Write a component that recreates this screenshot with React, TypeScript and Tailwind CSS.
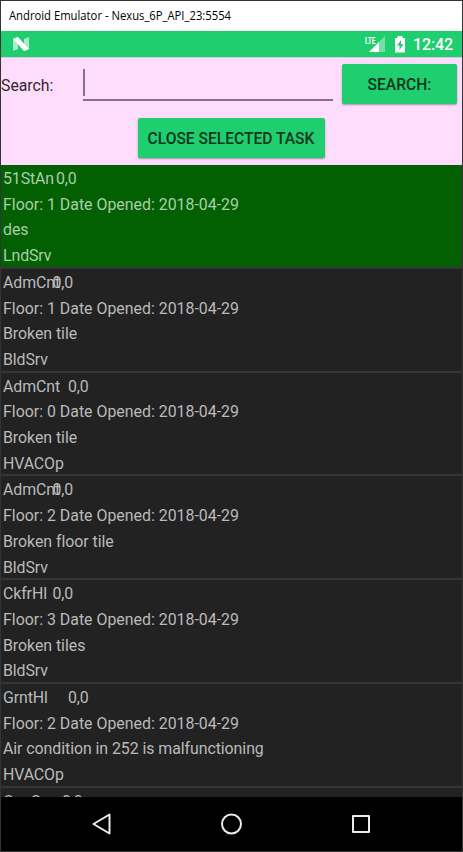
interface Task {
  building: string;
  floor: number;
  description: string;
  service: string;
  coordsLeft: string;
  selected?: boolean;
  tight?: boolean;
}

const tasks: Task[] = [
  { building: "51StAn", floor: 1, description: "des", service: "LndSrv", coordsLeft: "left-[53px]", selected: true },
  { building: "AdmCnt", floor: 1, description: "Broken tile", service: "BldSrv", coordsLeft: "left-[49.5px]" },
  { building: "AdmCnt", floor: 0, description: "Broken tile", service: "HVACOp", coordsLeft: "left-[65px]" },
  { building: "AdmCnt", floor: 2, description: "Broken floor tile", service: "BldSrv", coordsLeft: "left-[49.5px]" },
  { building: "CkfrHl", floor: 3, description: "Broken tiles", service: "BldSrv", coordsLeft: "left-[49.5px]" },
  { building: "GrntHl", floor: 2, description: "Air condition in 252 is malfunctioning", service: "HVACOp", coordsLeft: "left-[65px]", tight: true },
  { building: "GeoSce", floor: 1, description: "Broken light", service: "BldSrv", coordsLeft: "left-[59px]" },
];

function TaskRow({ task }: { task: Task }) {
  return (
    <li
      className={`h-[103.8px] shrink-0 border-b-2 border-[#353535] pt-px pl-0.5 text-[15.9px] leading-[25.7px] whitespace-nowrap ${
        task.selected ? "bg-[#026002] text-[#a9cea9]" : "bg-[#222222] text-[#bababa]"
      }`}
    >
      <div className="relative tracking-[-0.1px]">
        {task.building}
        <span className={`absolute top-0 ${task.coordsLeft}`}>0,0</span>
      </div>
      <div>Floor: {task.floor} Date Opened: 2018-04-29</div>
      <div className={task.tight ? "tracking-[-0.06px]" : "tracking-[-0.04px]"}>{task.description}</div>
      <div className="tracking-[-0.1px]">{task.service}</div>
    </li>
  );
}

function StatusBar() {
  return (
    <div className="flex h-[26px] shrink-0 items-center bg-[#1fce6f] pr-[9px] pl-[11px] text-white">
      <svg width="18" height="14" viewBox="0 0 18 14">
        <path d="M1 2 6 0v12l-5 2zM12 2l5-2v12l-5 2z" fill="#a9edca" />
        <path d="M1 2 6 0l11 12-5 2z" fill="#fff" />
      </svg>
      <svg className="ml-auto" width="22" height="18" viewBox="0 0 22 18">
        <path d="M5 17 21 1v16z" fill="#74dfa6" />
        <path d="M5 17 15 7v10z" fill="#fff" />
        <text x="1" y="8.500" fontSize="9.500" fontWeight="700" textLength="10.500" lengthAdjust="spacingAndGlyphs" fill="#fff" stroke="#1fce6f" strokeWidth="1.500" paintOrder="stroke">LTE</text>
      </svg>
      <svg className="ml-[8px]" width="12" height="17" viewBox="0 0 12 17">
        <path d="M3.500 0h5v2H11v14.500H1V2h2.500z" fill="#fff" />
        <path d="M7 4 3 9.500h2.500V14l4-6H7z" fill="#1fce6f" />
      </svg>
      <span className="ml-[7px] pt-px text-[16px] leading-5 font-medium tracking-[-0.1px]">12:42</span>
    </div>
  );
}

function ActionButton({ label, className }: { label: string; className: string }) {
  return (
    <button
      className={`rounded-[2px] bg-[#1fce6f] pt-[4px] text-[15.6px] font-medium whitespace-nowrap text-[#0c361e] shadow-[0_1px_2px_rgba(0,0,0,0.35)] ${className}`}
    >
      {label}
    </button>
  );
}

function SearchPanel() {
  return (
    <div className="h-[108px] shrink-0 border-t border-[#d9c8d9] bg-[#fedcfc]">
      <div className="flex h-[46px] pt-[6px] pr-[5px]">
        <label className="w-[82px] pt-[12px] text-[15.8px] leading-5 text-[#35272f]">Search:</label>
        <div className="h-[37px] w-[250px] border-b-2 border-[#85747f] pt-[5px]">
          <div className="h-[27px] w-[2px] bg-[#85747f]" />
        </div>
        <ActionButton label="SEARCH:" className="ml-[9px] h-[40px] w-[115px]" />
      </div>
      <div className="flex justify-center pt-[14px] pr-px">
        <ActionButton label="CLOSE SELECTED TASK" className="h-[40px] w-[187px]" />
      </div>
    </div>
  );
}

function NavigationBar() {
  return (
    <div className="flex h-[54px] shrink-0 items-center justify-between bg-black pr-[91px] pl-[90px]">
      <svg width="22" height="24" viewBox="0 0 22 24" fill="none" stroke="#ececec" strokeWidth="2" strokeLinejoin="round">
        <path d="M2.500 12 18.500 2.500v19z" />
      </svg>
      <svg width="24" height="24" viewBox="0 0 24 24" fill="none" stroke="#ececec" strokeWidth="2">
        <circle cx="11.500" cy="12" r="9.500" />
      </svg>
      <svg width="20" height="20" viewBox="0 0 20 20" fill="none" stroke="#ececec" strokeWidth="2" strokeLinejoin="round">
        <rect x="2" y="2" width="16" height="16" />
      </svg>
    </div>
  );
}

export default function App() {
  return (
    <div className="flex h-[852px] w-[463px] flex-col overflow-hidden border border-[#343434] font-[Roboto,sans-serif]">
      <div className="h-[30px] shrink-0 bg-white pl-[8px] font-['Open_Sans','Noto_Sans',sans-serif] text-[12px] leading-[30px] text-black">
        <span className="inline-block origin-left scale-x-[0.938] whitespace-nowrap">Android Emulator - Nexus_6P_API_23:5554</span>
      </div>
      <StatusBar />
      <SearchPanel />
      <ul className="flex min-h-0 flex-1 flex-col overflow-hidden bg-[#222222]">
        {tasks.map((task, index) => (
          <TaskRow key={index} task={task} />
        ))}
      </ul>
      <NavigationBar />
    </div>
  );
}
